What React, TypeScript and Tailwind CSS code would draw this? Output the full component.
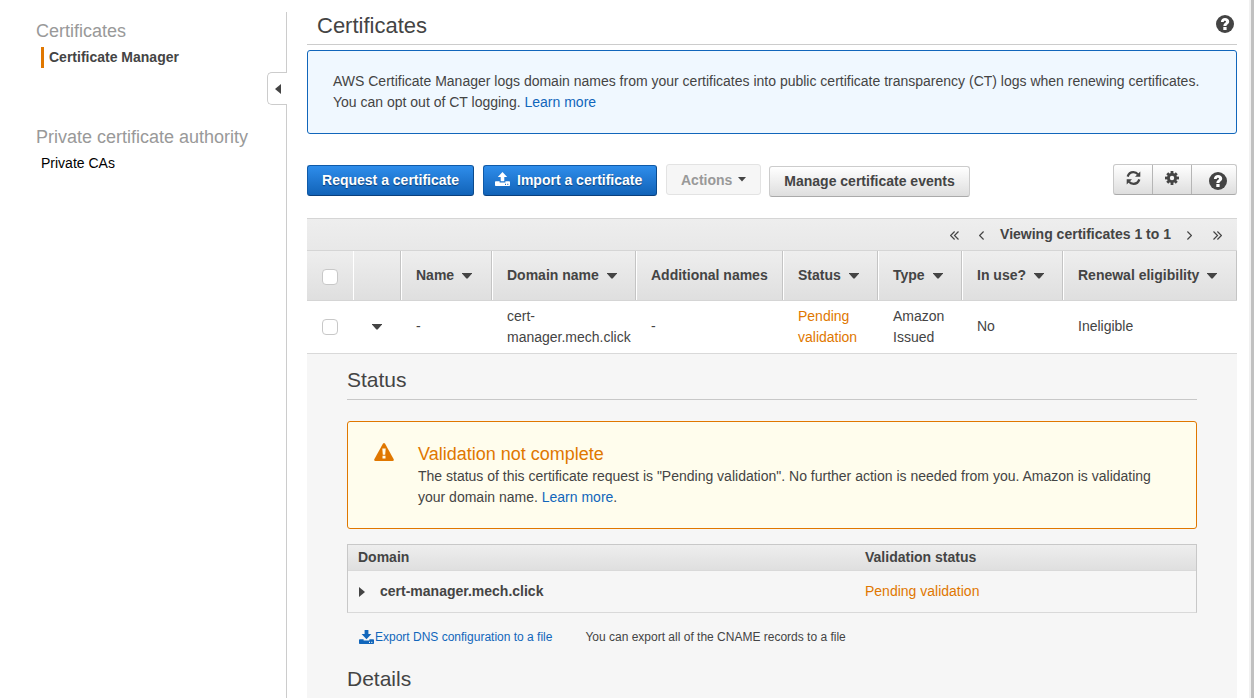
import type { ReactNode } from 'react';

function HelpIcon() {
  return (
    <svg width="18" height="18" viewBox="0 0 18 18" className="block shrink-0">
      <circle cx="9" cy="9" r="9" fill="#444" />
      <path
        d="M4.900 6.900C5 4.400 6.700 3.100 9 3.100c2.300 0 4.200 1.300 4.200 3.400 0 1.500-.8 2.200-1.700 2.900-.8.5-1 .8-1 1.600H7.400c0-1.700.6-2.400 1.600-3.100.7-.5 1-.7 1-1.300 0-.5-.4-.8-1-.8-.8 0-1.200.4-1.300 1.200z"
        fill="#fff"
      />
      <rect x="7.300" y="12" width="3.300" height="3" fill="#fff" />
    </svg>
  );
}

function TrayIcon({ down = false, className = '' }: { down?: boolean; className?: string }) {
  return (
    <svg width="15" height="14" viewBox="0 0 15 14" fill="currentColor" className={`block shrink-0 ${className}`}>
      <path d={down ? 'M5.600 0h3.800v4h3L7.500 9.200 2.600 4h3z' : 'M7.500 0l4.700 4.900H9.300V9.300H5.700V4.900H2.800z'} />
      <path
        fillRule="evenodd"
        d="M.8 9.300H4.600V10.500H10.400V9.300H14.200Q15 9.300 15 10.100V13.200Q15 14 14.200 14H.8Q0 14 0 13.200V10.100Q0 9.300.8 9.300zM10 11.700V13H11V11.700zM12.300 11.700V13H13.300V11.700z"
      />
    </svg>
  );
}

function RefreshIcon() {
  return (
    <svg width="15" height="14" viewBox="0 0 15 14" className="block">
      <path d="M1.700 5.600C2.500 2.900 4.700 1.200 7.400 1.200c2 0 3.500.8 4.600 2.200M13.300 8.400c-.8 2.700-3 4.400-5.700 4.400-2 0-3.600-.8-4.700-2.200" fill="none" stroke="#444" strokeWidth="2.300" />
      <path d="M14.300 .6v5.200H9zM.7 13.400v-5.200h5.300z" fill="#444" />
    </svg>
  );
}

function GearIcon() {
  return (
    <svg width="14" height="14" viewBox="0 0 14 14" className="block">
      <g fill="#444">
        <rect x="5.600" y="0" width="2.800" height="14" />
        <rect x="0" y="5.600" width="14" height="2.800" />
        <rect x="5.600" y="0.300" width="2.800" height="13.400" transform="rotate(45 7 7)" />
        <rect x="5.600" y="0.300" width="2.800" height="13.400" transform="rotate(-45 7 7)" />
        <circle cx="7" cy="7" r="5" />
      </g>
      <circle cx="7" cy="7" r="2.200" fill="#f3f3f3" />
    </svg>
  );
}

function Caret({ className = '' }: { className?: string }) {
  return (
    <svg width="10" height="6" viewBox="0 0 10 6" className={`block shrink-0 ${className}`}>
      <path d="M0 0h10v.6L5.600 5.500h-1.200L0 .6z" fill="#444" />
    </svg>
  );
}

function Chevrons({ double = false, flip = false, className = '' }: { double?: boolean; flip?: boolean; className?: string }) {
  return (
    <svg width={double ? 9 : 5} height="9" viewBox={double ? '0 0 9 9' : '0 0 5 9'} className={`block shrink-0 ${flip ? '-scale-x-100' : ''} ${className}`}>
      <path d={double ? 'M4.600.5l-4 4 4 4M8.500.5l-4 4 4 4' : 'M4.600.5l-4 4 4 4'} fill="none" stroke="#444" strokeWidth="1.200" />
    </svg>
  );
}

function Checkbox() {
  return <div className="size-4 rounded-[4px] border border-[#c8c8c8] bg-white" />;
}

function HeadCell({ children, sort = true }: { children: ReactNode; sort?: boolean }) {
  return (
    <div className="flex items-center border-l border-r border-l-white border-r-[#c4c4c4] pl-[14px] font-bold whitespace-nowrap">
      <span>{children}</span>
      {sort && <Caret className="mt-px ml-2" />}
    </div>
  );
}

const columns = 'grid grid-cols-[46px_48px_91px_144px_147px_95px_84px_101px_174px]';
const blueButton =
  'flex h-[31px] items-center rounded-[3px] border border-[#0f5aa8] border-b-[#0a3f7c] border-r-[#0b4a8c] bg-linear-to-b from-[#2e8deb] to-[#1163b8] font-bold text-white [text-shadow:0_1px_1px_#083c74]';

function Sidebar() {
  return (
    <aside className="flex w-[287px] shrink-0 pt-3">
      <nav className="w-[267px] pl-9">
        <h2 className="mt-[5px] text-lg leading-7 text-[#999]">Certificates</h2>
        <div className="mt-[2px] ml-[5px] h-[21px] border-l-[3px] border-[#e07700] pl-[5px] font-bold">Certificate Manager</div>
        <h2 className="mt-[55px] text-lg leading-7 whitespace-nowrap text-[#999]">Private certificate authority</h2>
        <div className="mt-[2px] ml-[5px] text-black">Private CAs</div>
      </nav>
      <div className="flex w-5 flex-col">
        <div className="h-[60px] border-r border-[#ccc]" />
        <div className="flex h-[33px] items-center rounded-l-[5px] border border-r-0 border-[#ccc] pl-[7px]">
          <svg width="6" height="10" viewBox="0 0 6 10">
            <path d="M6 0v10L0 5z" fill="#444" />
          </svg>
        </div>
        <div className="flex-1 border-r border-[#ccc]" />
      </div>
    </aside>
  );
}

function Toolbar() {
  return (
    <div className="mt-[30px] flex h-[33px] items-start">
      <button className={`${blueButton} mt-px w-[167px] justify-center`}>Request a certificate</button>
      <button className={`${blueButton} mt-px ml-[9px] w-[174px] pl-[11px]`}>
        <TrayIcon className="-mt-[3px] mr-[7px]" />
        Import a certificate
      </button>
      <button className="ml-[9px] flex h-[31px] w-[95px] items-center rounded-[3px] border border-[#e3e3e3] bg-[#f6f6f6] pt-[2px] pl-[14px] font-bold text-[#999]">
        Actions
        <svg width="8" height="5" viewBox="0 0 8 5" className="-mt-[3px] ml-[6px]">
          <path d="M0 0h8L4 4.500z" fill="#444" />
        </svg>
      </button>
      <button className="mt-[2px] ml-2 h-[31px] w-[201px] rounded-[3px] border border-[#ccc] border-b-[#aaa] bg-linear-to-b from-white to-[#dedede] font-bold">
        Manage certificate events
      </button>
      <div className="ml-auto flex h-[31px] w-[124px] rounded-[3px] border border-[#c8c8c8] border-b-[#aaa] bg-linear-to-b from-white to-[#dedede]">
        <button className="flex w-[39px] justify-center border-r border-[#b5b5b5] pt-[6px]"><RefreshIcon /></button>
        <button className="flex w-[39px] justify-center border-r border-[#b5b5b5] pt-[6px]"><GearIcon /></button>
        <button className="flex flex-1 pt-[7px] pl-[17px]"><HelpIcon /></button>
      </div>
    </div>
  );
}

function CertificateTable() {
  return (
    <div className="mt-[21px]">
      <div className="flex h-8 items-center border-t border-[#d5d5d5] bg-linear-to-b from-[#eee] to-[#e8e8e8] pr-[15px]">
        <Chevrons double className="mt-px ml-auto" />
        <Chevrons className="mt-px ml-5" />
        <span className="mx-4 font-bold">Viewing certificates 1 to 1</span>
        <Chevrons flip className="mt-px" />
        <Chevrons double flip className="mt-px ml-[21px]" />
      </div>
      <div className={`${columns} h-[51px] border-y border-[#d5d5d5] bg-linear-to-b from-[#eee] to-[#dfdfdf]`}>
        <div className="flex items-center pt-[2px] pl-[15px]"><Checkbox /></div>
        <div className="border-l border-r border-l-white border-r-[#c4c4c4]" />
        <HeadCell>Name</HeadCell>
        <HeadCell>Domain name</HeadCell>
        <HeadCell sort={false}>Additional names</HeadCell>
        <HeadCell>Status</HeadCell>
        <HeadCell>Type</HeadCell>
        <HeadCell>In use?</HeadCell>
        <HeadCell>Renewal eligibility</HeadCell>
      </div>
      <div className={`${columns} h-[53px] items-center border-b border-[#d9d9d9]`}>
        <div className="pl-[15px]"><Checkbox /></div>
        <Caret className="-mt-px ml-[19px]" />
        <div className="pb-px pl-[15px]">-</div>
        <div className="pl-[15px]">cert-<br />manager.mech.click</div>
        <div className="pb-px pl-[15px]">-</div>
        <div className="pl-[15px] text-[#e07700]">Pending validation</div>
        <div className="pl-[15px]">Amazon Issued</div>
        <div className="pb-[2px] pl-[15px]">No</div>
        <div className="pb-[2px] pl-[15px]">Ineligible</div>
      </div>
    </div>
  );
}

function CertificateDetails() {
  return (
    <section className="flex-1 bg-[#f6f6f6] px-10">
      <h2 className="h-[46px] border-b border-[#c8c8c8] pt-[11px] text-[21px] leading-[30px]">Status</h2>
      <div className="mt-[21px] flex h-[108px] rounded-[3px] border border-[#e07700] bg-[#fffded]">
        <svg width="20" height="18" viewBox="0 0 20 18" className="mt-[21px] ml-[26px] shrink-0">
          <path d="M8.900.7Q10-.7 11.100.7L19.700 16.300Q20.200 18 18.600 18H1.400Q-.2 18 .3 16.300z" fill="#e07700" />
          <path d="M8.300 5.500h3.400l-.5 6.200H8.800zM8.500 12.800h3v2.700h-3z" fill="#fffded" />
        </svg>
        <div className="ml-6 pt-5">
          <h3 className="text-lg leading-6 text-[#e07700]">Validation not complete</h3>
          <p className="w-[745px]">
            The status of this certificate request is "Pending validation". No further action is needed from you. Amazon is validating your domain name.{' '}
            <a className="text-[#1166bb]">Learn more</a>.
          </p>
        </div>
      </div>
      <div className="mt-[15px] border border-[#c8c8c8] border-b-[#d9d9d9]">
        <div className="grid h-[26px] grid-cols-[517px_1fr] border-b border-[#d9d9d9] bg-linear-to-b from-[#eee] to-[#dfdfdf] pt-[2px] font-bold">
          <div className="pl-[10px]">Domain</div>
          <div>Validation status</div>
        </div>
        <div className="grid h-[41px] grid-cols-[517px_1fr] items-center">
          <div className="flex items-center pl-[11px] font-bold">
            <svg width="6" height="10" viewBox="0 0 6 10" className="mr-[15px]">
              <path d="M0 0v10l6-5z" fill="#444" />
            </svg>
            cert-manager.mech.click
          </div>
          <div className="text-[#e07700]">Pending validation</div>
        </div>
      </div>
      <div className="mt-[15px] flex items-center pl-3 text-xs leading-[18px]">
        <TrayIcon down className="mr-px text-[#1166bb]" />
        <a className="text-[#1166bb]">Export DNS configuration to a file</a>
        <span className="ml-[33px]">You can export all of the CNAME records to a file</span>
      </div>
      <h2 className="mt-[18px] text-[21px] leading-[30px]">Details</h2>
    </section>
  );
}

export default function App() {
  return (
    <div className="flex h-[698px] w-[1254px] overflow-hidden bg-white font-['Liberation_Sans',Arial,sans-serif] text-sm leading-[21px] text-[#444]">
      <Sidebar />
      <main className="ml-5 flex w-[930px] flex-col">
        <header className="flex h-[45px] items-start justify-between border-b border-[#ccc] pr-[3px] pl-[10px]">
          <h1 className="pt-[11px] text-[22px] leading-[30px]">Certificates</h1>
          <div className="mt-[15px]"><HelpIcon /></div>
        </header>
        <div className="mt-[5px] h-[84px] rounded-[3px] border border-[#1166bb] bg-[#f0f8ff] pt-5 pl-[25px]">
          AWS Certificate Manager logs domain names from your certificates into public certificate transparency (CT) logs when renewing certificates.
          <br />
          You can opt out of CT logging. <a className="text-[#1166bb]">Learn more</a>
        </div>
        <Toolbar />
        <CertificateTable />
        <CertificateDetails />
      </main>
      <div className="ml-auto w-[5px] border-l-2 border-[#f1f1f1] bg-[#c1c1c1]" />
    </div>
  );
}
